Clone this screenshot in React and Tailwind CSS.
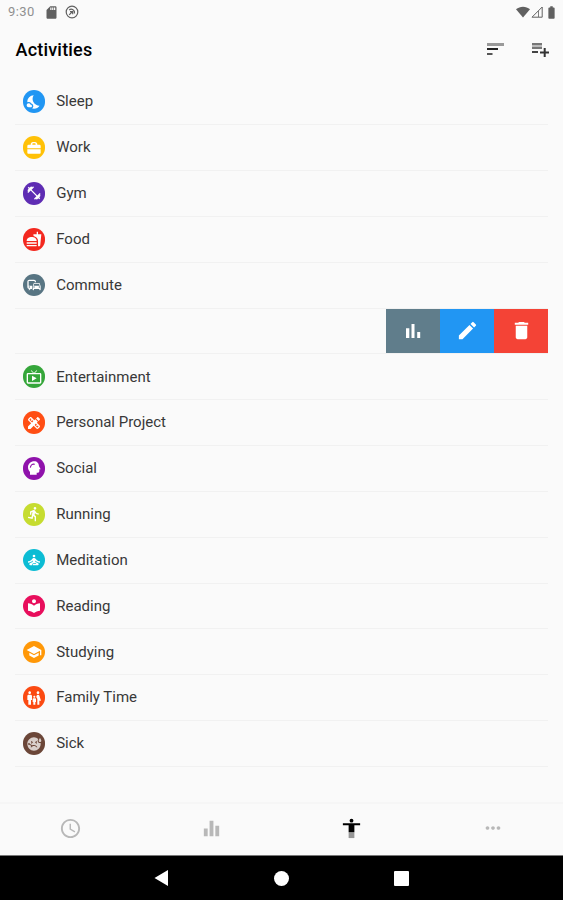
import {
  MdBatteryFull,
  MdCommute,
  MdDelete,
  MdDesignServices,
  MdDirectionsRun,
  MdEdit,
  MdEqualizer,
  MdFamilyRestroom,
  MdFastfood,
  MdFitnessCenter,
  MdLiveTv,
  MdLocalLibrary,
  MdMoreHoriz,
  MdNightsStay,
  MdSchedule,
  MdSchool,
  MdSdCard,
  MdSelfImprovement,
  MdSick,
} from "react-icons/md";

const WorkIcon = ({ className }) => (
  <svg viewBox="0 0 24 24" className={className} fill="currentColor">
    <path d="M7 7c0-2.500 1.500-4 3.500-4h3c2 0 3.500 1.500 3.500 4h3a2 2 0 0 1 2 2v3.500H2V9a2 2 0 0 1 2-2zm2.500 0h5c0-1.300-.5-2-1.500-2h-2c-1 0-1.500.7-1.500 2z" />
    <path d="M2 14h20v5a1.500 1.500 0 0 1-1.500 1.500h-17A1.500 1.500 0 0 1 2 19z" />
  </svg>
);

const SocialIcon = ({ className }) => (
  <svg viewBox="0 0 24 24" className={className} fill="none">
    <path
      d="M12.500 2C7 2 3 6 3 11c0 3.500 1.500 5.500 3 7v4h10v-3h2a2 2 0 0 0 2-2v-3h2l-2.500-4.500C19.500 5 16.500 2 12.500 2z"
      fill="currentColor"
    />
    <path d="M6.500 11.500C7 7 10 5.500 13 6.500" stroke="#8f12ab" strokeWidth="1.800" />
  </svg>
);

const BarsIcon = ({ className }) => (
  <svg viewBox="0 0 24 24" className={className} fill="currentColor">
    <path d="M5 9.200h3.300V19H5zM10.500 5h3v14h-3zm5.700 8h3v6h-3z" />
  </svg>
);

const PersonIcon = ({ className }) => (
  <svg viewBox="0 0 24 24" className={className} fill="currentColor">
    <circle cx="12" cy="3.800" r="2" />
    <path d="M3 6.500h18v2.200h-6V16H9V8.700H3z" />
    <path d="M9 16h6v6H9z" opacity=".4" />
  </svg>
);

const activities = [
  { name: "Sleep", icon: MdNightsStay, color: "bg-[#2196f3]" },
  { name: "Work", icon: WorkIcon, color: "bg-[#ffc107]" },
  { name: "Gym", icon: MdFitnessCenter, color: "bg-[#5e2cb3]" },
  { name: "Food", icon: MdFastfood, color: "bg-[#f3281f]" },
  { name: "Commute", icon: MdCommute, color: "bg-[#587583]" },
  { name: "Swiped", swiped: true },
  { name: "Entertainment", icon: MdLiveTv, color: "bg-[#35a63a]" },
  { name: "Personal Project", icon: MdDesignServices, color: "bg-[#ff4e14]" },
  { name: "Social", icon: SocialIcon, color: "bg-[#8f12ab]" },
  { name: "Running", icon: MdDirectionsRun, color: "bg-[#c6dc30]" },
  { name: "Meditation", icon: MdSelfImprovement, color: "bg-[#0cbcd4]" },
  { name: "Reading", icon: MdLocalLibrary, color: "bg-[#e80e5c]" },
  { name: "Studying", icon: MdSchool, color: "bg-[#ff9808]" },
  { name: "Family Time", icon: MdFamilyRestroom, color: "bg-[#fb4a12]" },
  { name: "Sick", icon: MdSick, color: "bg-[#6b4638]", iconColor: "text-[#d9cfcb]" },
];

const StatusBar = () => (
  <div className="flex h-6 items-center justify-between pl-2 pr-1 text-[#606060]">
    <div className="flex items-center">
      <span className="w-[36px] text-[13px] tracking-[0.4px] text-[#909090]">9:30</span>
      <MdSdCard className="h-[15px] w-[15px]" />
      <svg viewBox="0 0 14 14" className="ml-[6px] h-3.5 w-3.5" fill="none" stroke="currentColor">
        <circle cx="7" cy="7" r="5.800" strokeWidth="1.200" />
        <path d="M4.200 5C6.500 3 10.200 5 9.500 8.500M4.200 9.800l3.300-3.300M5 6.700h2.700v2.600" strokeWidth="1.200" />
      </svg>
    </div>
    <div className="flex items-center">
      <svg viewBox="0 0 14 12" className="h-3 w-3.5" fill="currentColor">
        <path d="M0 3.200C4-.2 10-.2 14 3.200L7 11.500z" />
      </svg>
      <svg viewBox="0 0 12 12" className="mx-px h-3 w-3" fill="none" stroke="currentColor">
        <path d="M1 11.200L11.200 1v10.200z" strokeWidth="1" />
        <path d="M7.500 5v6" strokeWidth="0.800" />
      </svg>
      <MdBatteryFull className="h-[15px] w-[15px]" />
    </div>
  </div>
);

const ActivityRow = ({ name, icon: Icon, color, iconColor = "text-white" }) => (
  <div className="flex h-full items-center pl-[7.600px]">
    <div className={`flex h-[22.600px] w-[22.600px] items-center justify-center rounded-full ${color}`}>
      <Icon className={`h-4 w-4 ${iconColor}`} />
    </div>
    <span className="ml-[11px] text-[15px] text-[#383838]">{name}</span>
  </div>
);

const SwipeActions = () => (
  <div className="flex h-full justify-end text-white">
    <button className="flex w-[54px] items-center justify-center bg-[#607d8b]">
      <BarsIcon className="h-6 w-6" />
    </button>
    <button className="flex w-[54px] items-center justify-center bg-[#2196f3]">
      <MdEdit className="h-[23px] w-[23px]" />
    </button>
    <button className="flex w-[54px] items-center justify-center bg-[#f44336]">
      <MdDelete className="h-[23px] w-[23px]" />
    </button>
  </div>
);

const App = () => {
  return (
    <div className="flex h-[900px] w-[563px] flex-col overflow-hidden bg-[#fafafa] font-['Roboto',sans-serif]">
      <StatusBar />

      <header className="flex h-[54px] items-center justify-between pb-1 pl-[15.500px] pr-3">
        <h1 className="text-[18px] font-medium tracking-[0.2px] text-black">Activities</h1>
        <div className="flex items-center gap-[23px]">
          <svg viewBox="0 0 22 22" className="h-[22px] w-[22px]">
            <path d="M3 5h17v3H3z" fill="#999" />
            <path d="M3 10h11v2H3z" fill="#222" />
            <path d="M3 15h5.500v2H3z" fill="#555" />
          </svg>
          <svg viewBox="0 0 22 22" className="h-[22px] w-[22px]">
            <path d="M3 5h10v2H3zM3 9h10v2H3z" fill="#777" />
            <path d="M3 7h10v2H3z" fill="#bbb" />
            <path d="M3 13h6v2H3z" fill="#444" />
            <path d="M14.700 10h2v3.500H20v2h-3.300V19h-2v-3.500H11v-2h3.700z" fill="#333" />
          </svg>
        </div>
      </header>

      <main className="flex-1 px-[15px] pt-[1.300px]">
        {activities.map((activity) => (
          <div key={activity.name} className="h-[45.850px] border-b border-[#f1f1f1]">
            {activity.swiped ? <SwipeActions /> : <ActivityRow {...activity} />}
          </div>
        ))}
      </main>

      <nav className="grid h-[53px] grid-cols-4 place-items-center border-t-2 border-[#f6f6f6] pb-[3px] text-[#b8b8b8]">
        <MdSchedule className="h-[23px] w-[23px]" />
        <MdEqualizer className="h-[23px] w-[23px]" />
        <PersonIcon className="h-[23px] w-[23px] text-black" />
        <MdMoreHoriz className="h-[22px] w-[22px]" />
      </nav>

      <div className="flex h-[45px] items-center justify-center gap-[105px] border-t border-[#777] bg-black pr-[2px] text-white">
        <svg viewBox="0 0 16 16" className="h-4 w-4" fill="currentColor">
          <path d="M1.500 8l13.500-8v16z" />
        </svg>
        <div className="h-[15px] w-[15px] rounded-full bg-white" />
        <div className="h-[15px] w-[15px] rounded-[1px] bg-white" />
      </div>
    </div>
  );
};

export default App;
